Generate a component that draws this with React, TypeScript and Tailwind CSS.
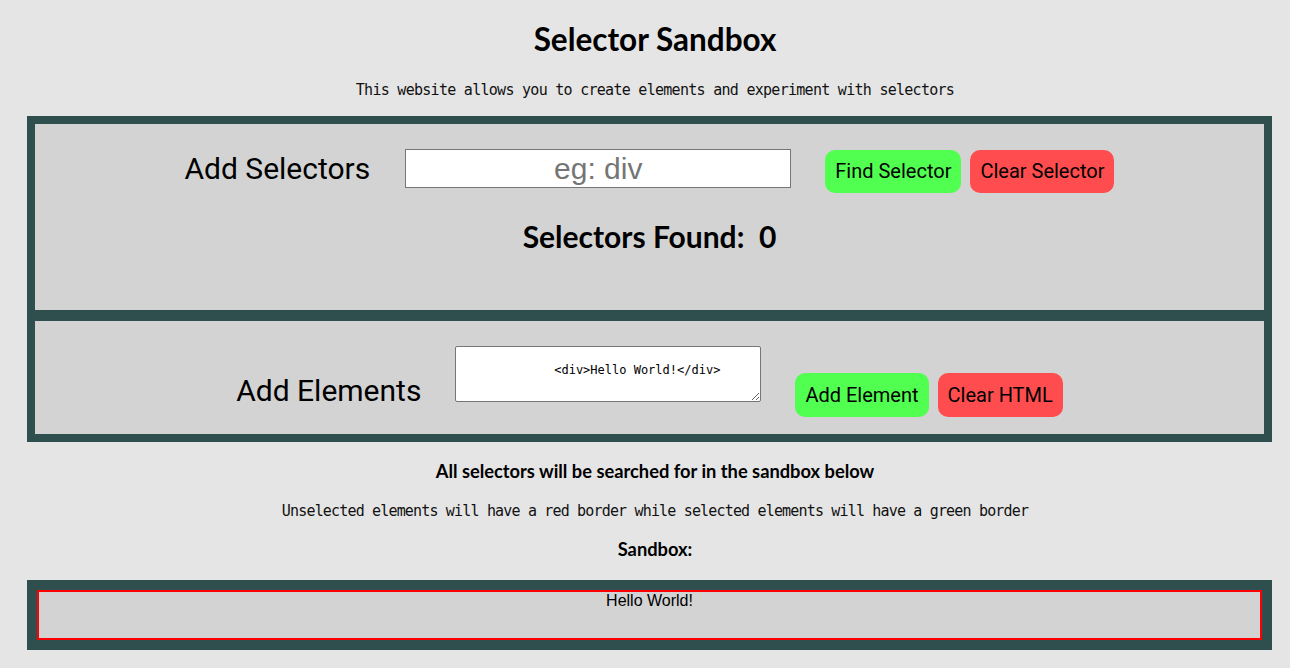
import { useState } from "react";

const lato = "font-['Lato',_'Liberation_Sans',_sans-serif]";
const roboto = "font-['Roboto',_'Liberation_Sans',_sans-serif]";
const mono = "font-['DejaVu_Sans_Mono',_'Liberation_Mono',_monospace]";

export default function App() {
  const [selector, setSelector] = useState("");
  const [html, setHtml] = useState("\n        <div>Hello World!</div>\n    ");
  const [found] = useState(0);

  return (
    <div className="min-h-screen bg-[#e5e5e5] text-black">
      <div className="pl-[20px] text-center">
        <h1 className={`${lato} pt-[20px] text-[31.5px] font-bold leading-[38px]`}>
          Selector Sandbox
        </h1>
        <p className={`${mono} mt-[22px] text-[15px] leading-[20px] tracking-[-0.72px] text-[#111]`}>
          This website allows you to create elements and experiment with selectors
        </p>
      </div>

      <div className="mt-[16px] ml-[27px] mr-[18px] border-[8px] border-[#2f4f4f] bg-[#d3d3d3]">
        <div className="h-[186px] pt-[25px]">
          <div className="flex items-start justify-center">
            <span className={`${roboto} mt-[2px] mr-[35px] text-[30px] leading-[36px]`}>
              Add Selectors
            </span>
            <input
              value={selector}
              onChange={(e) => setSelector(e.target.value)}
              placeholder="eg: div"
              className="font-['Liberation_Sans',_Arial,_sans-serif] mr-[34px] h-[39px] w-[386px] border border-[#767676] bg-white px-[2px] text-center text-[30px] outline-none placeholder:text-[#757575]"
            />
            <button
              className={`${roboto} mt-[1px] mr-[9px] rounded-[10px] bg-[#50ff50] px-[10px] py-[10px] text-[20px] leading-[23px]`}
            >
              Find Selector
            </button>
            <button
              className={`${roboto} mt-[1px] rounded-[10px] bg-[#ff4d4f] px-[10px] py-[10px] text-[20px] leading-[23px]`}
            >
              Clear Selector
            </button>
          </div>
          <h2 className={`${lato} mt-[24px] text-center text-[30px] font-bold leading-[38px]`}>
            Selectors Found:{"\u00a0"} {found}
          </h2>
        </div>

        <div className="h-[11px] bg-[#2f4f4f]" />

        <div className="h-[113px] pt-[25px]">
          <div className="flex items-start justify-center">
            <span className={`${roboto} mt-[27px] mr-[34px] text-[30px] leading-[36px]`}>
              Add Elements
            </span>
            <textarea
              value={html}
              onChange={(e) => setHtml(e.target.value)}
              className={`${mono} mr-[34px] h-[56px] w-[306px] rounded-[2px] border border-[#767676] bg-white px-[2px] py-[2px] text-center text-[12px] leading-[14px] outline-none`}
            />
            <button
              className={`${roboto} mt-[27px] mr-[9px] rounded-[10px] bg-[#50ff50] px-[10px] py-[10px] text-[20px] leading-[24px]`}
            >
              Add Element
            </button>
            <button
              className={`${roboto} mt-[27px] rounded-[10px] bg-[#ff4d4f] px-[10px] py-[10px] text-[20px] leading-[24px]`}
            >
              Clear HTML
            </button>
          </div>
        </div>
      </div>

      <div className="pl-[20px] text-center">
        <h3 className={`${lato} mt-[18px] text-[18.3px] font-bold leading-[22px]`}>
          All selectors will be searched for in the sandbox below
        </h3>
        <p className={`${mono} mt-[19px] text-[15px] leading-[20px] tracking-[-0.83px] text-[#111]`}>
          Unselected elements will have a red border while selected elements will have a green border
        </p>
        <h3 className={`${lato} mt-[17px] text-[18.3px] font-bold leading-[22px]`}>
          Sandbox:
        </h3>
      </div>

      <div className="mt-[20px] ml-[27px] mr-[18px] bg-[#2f4f4f] p-[10px]">
        <div className="h-[50px] border-2 border-[#ff0000] bg-[#d3d3d3] text-center font-['Liberation_Sans',_Arial,_sans-serif] text-[16px] leading-[18px]">
          Hello World!
        </div>
      </div>
    </div>
  );
}
